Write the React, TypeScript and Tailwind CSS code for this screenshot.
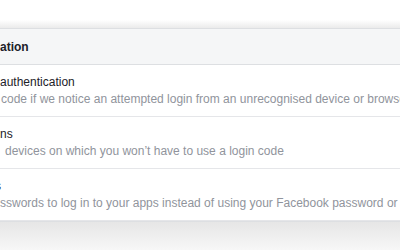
const rows = [
  {
    title: 'authentication',
    titleClass: 'pl-0',
    desc: 'code if we notice an attempted login from an unrecognised device or browser',
    descClass: 'pl-px',
  },
  {
    title: 'ns',
    titleClass: 'pl-0',
    desc: 'devices on which you won\u2019t have to use a login code',
    descClass: 'pl-[5px]',
  },
  {
    title: 'App passwords',
    titleClass: '-ml-[81px]',
    desc: 'sswords to log in to your apps instead of using your Facebook password or login codes',
    descClass: 'pl-0',
  },
]

export default function App() {
  return (
    <div className="flex h-[250px] w-[400px] flex-col overflow-hidden bg-white font-['Liberation_Sans',Arial,sans-serif] text-[12px]">
      <div className="h-[20px] shrink-0 bg-white" />
      <div className="h-[8px] shrink-0 bg-gradient-to-b from-white to-[#ebebeb]" />
      <div className="shrink-0 border-y border-[#dddfe2] bg-[#f5f6f7]">
        <div className="flex h-[35px] items-center whitespace-nowrap font-bold text-[#1d2129]">
          ation
        </div>
      </div>
      {rows.map((r) => (
        <div
          key={r.title}
          className="h-[52px] shrink-0 overflow-hidden border-b border-[#e5e6e9] pt-[9px] whitespace-nowrap"
        >
          <div className={`leading-[16px] text-[#1d2129] ${r.titleClass}`}>{r.title}</div>
          <div className={`mt-px leading-[16px] text-[#90949c] ${r.descClass}`}>{r.desc}</div>
        </div>
      ))}
      <div className="flex-1 border-t border-[#dddfe2] bg-gradient-to-b from-[#e6e6e6] to-[#f7f7f7]" />
    </div>
  )
}
